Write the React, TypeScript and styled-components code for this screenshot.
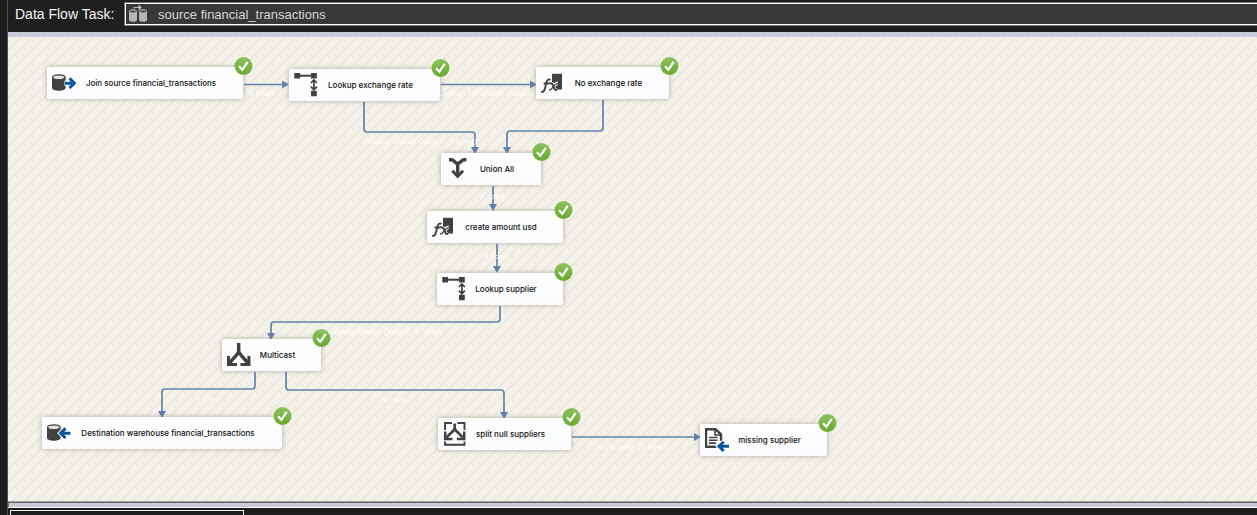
import React from "react";
import styled, { createGlobalStyle } from "styled-components";

const GlobalStyle = createGlobalStyle`
  *, *::before, *::after { box-sizing: border-box; }
  body {
    margin: 0;
    background: #1e1e1e;
    font-family: "Liberation Sans", Arial, sans-serif;
  }
`;

const LINE = "#6281ad";
const INK = "#414141";
const BLUE = "#0a559f";

const Page = styled.div`
  display: flex;
  flex-direction: column;
  min-height: 100vh;
  margin-left: 7px;
  border-left: 1px solid #4c4c4c;
  overflow: hidden;
`;

const Toolbar = styled.header`
  display: flex;
  align-items: center;
  height: 32px;
  padding: 2px 0 6px 7px;
  background: #1f1f1f;
`;

const ToolbarLabel = styled.label`
  flex: none;
  width: 109px;
  color: #f4f4f4;
  font-size: 14px;
  line-height: 24px;
`;

const TaskField = styled.div`
  display: flex;
  flex: 1;
  align-items: center;
  gap: 10px;
  height: 24px;
  padding-left: 3px;
  border: 1px solid #757575;
  border-right: 0;
  background: #383838;
  box-shadow: inset 1px 1px 0 #fff, inset 0 -1px 0 #fff;
`;

const TaskInput = styled.input`
  flex: 1;
  min-width: 0;
  padding: 1px 0 0;
  border: 0;
  outline: 0;
  background: transparent;
  color: #d6d6d6;
  font: 13px/20px "Liberation Sans", Arial, sans-serif;
`;

const Canvas = styled.main`
  position: relative;
  flex: 1;
  min-height: 469px;
  border-top: 5px solid #c8ccdb;
  background-color: #f4f1e9;
  background-image: linear-gradient(
    to bottom right,
    #e3e1da 0 2%,
    transparent 5% 45%,
    #e3e1da 49% 51%,
    transparent 55% 95%,
    #e3e1da 98%
  );
  background-size: 12px 12px;
  background-position: 1px 0;
`;

const Wires = styled.svg`
  position: absolute;
  top: 0;
  left: 0;
  width: 100%;
  height: 100%;
`;

const WireLabel = styled.span<{ $x: number; $y: number }>`
  position: absolute;
  left: ${(p) => p.$x}px;
  top: ${(p) => p.$y}px;
  color: rgba(255, 255, 255, 0.9);
  font: 400 8px/12px "Open Sans", "Segoe UI", sans-serif;
  white-space: nowrap;
`;

const NodeCard = styled.div<{ $x: number; $y: number; $w: number }>`
  position: absolute;
  left: ${(p) => p.$x}px;
  top: ${(p) => p.$y}px;
  display: flex;
  align-items: center;
  width: ${(p) => p.$w}px;
  height: 32px;
  padding: 0 17px 0 5px;
  border-radius: 2px;
  background: linear-gradient(#ffffff, #fafbfe);
  box-shadow: 0 0 5px rgba(90, 85, 70, 0.45);
`;

const NodeName = styled.span`
  flex: 1;
  color: #111;
  font: 500 8px/12px Inter, "Segoe UI", sans-serif;
  text-align: center;
  white-space: nowrap;
`;

const Badge = styled.svg`
  position: absolute;
  top: -10px;
  right: -10px;
  width: 19px;
  height: 19px;
`;

const Glyph = styled.svg`
  flex: none;
  width: 24px;
  height: 24px;
`;

const Splitter = styled.div`
  height: 7px;
  border-top: 1px solid #a3a19d;
  border-bottom: 1px solid #fff;
  background: #c9cad8;
  box-shadow: inset 0 1px 0 #666, inset 1px 0 0 #777;
`;

const PanelTray = styled.footer`
  height: 7px;
  padding: 2px 0 0 2px;
  background: #1e1e1e;
`;

const PanelTop = styled.div`
  width: 234px;
  height: 5px;
  border: 1px solid #f0f0f0;
  border-bottom: 0;
`;

type Kind = "source" | "lookup" | "derive" | "union" | "multicast" | "dest" | "split" | "file";

const Cylinder = () => (
  <>
    <path d="M0 6.300v10.500c0 1.900 3 3 6.800 3s6.800-1.100 6.800-3V6.300z" fill={INK} />
    <ellipse cx="6.800" cy="6.300" rx="6.200" ry="2.400" fill="#e4e4e4" stroke={INK} strokeWidth="1.300" />
  </>
);

const icons: Record<Kind, React.ReactNode> = {
  source: (
    <>
      <Cylinder />
      <path d="M12.500 12.200h9M17.500 7.400l4.900 4.800-4.900 4.800" fill="none" stroke="#fff" strokeWidth="5" />
      <path d="M13 12.200h9M17.500 7.400l4.900 4.800-4.900 4.800" fill="none" stroke={BLUE} strokeWidth="3" />
    </>
  ),
  dest: (
    <>
      <Cylinder />
      <path d="M23 12.200h-9M18.500 7.400l-4.900 4.800 4.900 4.800" fill="none" stroke="#fff" strokeWidth="5" />
      <path d="M23.500 12.200h-9M18.500 7.400l-4.900 4.800 4.900 4.800" fill="none" stroke={BLUE} strokeWidth="3" />
    </>
  ),
  lookup: (
    <>
      <path d="M0.300 0h5.800v5.500H0.300zM17 0h5.800v5.500H17zM17 17.800h5.800v5.500H17z" fill={INK} />
      <path d="M6 2.700h11" stroke={INK} strokeWidth="2" />
      <path d="M19.900 7.500v8.500M16.900 10l3-3 3 3M16.900 13.700l3 3 3-3" fill="none" stroke={INK} strokeWidth="1.700" />
    </>
  ),
  derive: (
    <>
      <path d="M11 2.800H21v15.700H11z" fill={INK} />
      <path d="M8.500 12.500q2.300-.8 3.200 1.200l1.600 4q.8 1.900 2.800 1M16.800 12.300q-2 0-4.300 3.300t-4.500 3.400" fill="none" stroke="#f4f4f4" strokeWidth="3.600" />
      <g fill="none" stroke={INK}>
        <path d="M0 20.700c2.400.7 3.300-.8 4-3.400l1.500-5.800c.7-2.600 2-3.700 4-2.700M2.600 12.500h6" strokeWidth="1.900" />
        <path d="M8.500 12.500q2.300-.8 3.200 1.200l1.600 4q.8 1.900 2.800 1" strokeWidth="1.900" />
        <path d="M16.800 12.300q-2 0-4.300 3.300t-4.500 3.400" strokeWidth="1.300" />
      </g>
    </>
  ),
  union: (
    <>
      <path
        d="M3 2.800h2.500c2.500 0 3.200 3.200 6.200 3.600c3-.4 3.700-3.600 6.200-3.600h2.500M11.700 6V19"
        fill="none"
        stroke={INK}
        strokeWidth="3.400"
      />
      <path d="M6.300 13.800l5.400 5.600 5.400-5.600" fill="none" stroke={INK} strokeWidth="3" />
    </>
  ),
  multicast: (
    <>
      <path d="M11.700 0V7.500c0 4-4 5.500-9 12.500M11.700 7.500c0 4 4 5.500 9 12.500" fill="none" stroke={INK} strokeWidth="3.400" />
      <path d="M1.500 13V21.500H10M21.900 13V21.500H13.400" fill="none" stroke={INK} strokeWidth="3" />
    </>
  ),
  split: (
    <>
      <path d="M9 1H2v7M14.500 1h7v7M2 19.500v3.300h19.500v-3.300" fill="none" stroke={INK} strokeWidth="1.900" />
      <path d="M11.700 1.500V6c0 3-4.500 4.500-8 9.500M11.700 6c0 3 4.500 4.500 8 9.500" fill="none" stroke={INK} strokeWidth="2.700" />
      <path d="M2.200 9.500v7.500H9.500M21.200 9.500v7.500H13.900" fill="none" stroke={INK} strokeWidth="2.500" />
    </>
  ),
  file: (
    <>
      <path d="M15 18.700H1V1.300h9.500l5.500 5v7" fill="none" stroke={INK} strokeWidth="2.400" />
      <path d="M10 1v6h6M4 9.500h8.500M4 12.300h8.500M4 15.100h7" fill="none" stroke={INK} strokeWidth="1.600" />
      <path d="M23.500 18.300h-9M18.500 13.700l-4.700 4.600 4.700 4.600" fill="none" stroke="#fff" strokeWidth="5" />
      <path d="M24 18.300h-9M18.700 13.700l-4.700 4.600 4.700 4.600" fill="none" stroke={BLUE} strokeWidth="3" />
    </>
  ),
};

interface FlowNode {
  kind: Kind;
  name: string;
  x: number;
  y: number;
  w: number;
}

const nodes: FlowNode[] = [
  { kind: "source", name: "Join source financial_transactions", x: 39, y: 30, w: 196 },
  { kind: "lookup", name: "Lookup exchange rate", x: 281, y: 32, w: 151 },
  { kind: "derive", name: "No exchange rate", x: 528, y: 30, w: 133 },
  { kind: "union", name: "Union All", x: 433, y: 116, w: 100 },
  { kind: "derive", name: "create amount usd", x: 419, y: 174, w: 136 },
  { kind: "lookup", name: "Lookup supplier", x: 429, y: 236, w: 126 },
  { kind: "multicast", name: "Multicast", x: 214, y: 302, w: 99 },
  { kind: "dest", name: "Destination warehouse financial_transactions", x: 34, y: 380, w: 240 },
  { kind: "split", name: "split null suppliers", x: 430, y: 381, w: 133 },
  { kind: "file", name: "missing supplier", x: 692, y: 387, w: 127 },
];

const wires = [
  "M236 47.500H275",
  "M433 47.500H523",
  "M356 65V92q0 3 3 3H464q3 0 3 3V111",
  "M595 63V91q0 3 -3 3H502q-3 0 -3 3V111",
  "M485 149V168",
  "M489 207V230",
  "M492 269V282q0 3 -3 3H266q-3 0 -3 3V297",
  "M247 335V349q0 3 -3 3H157q-3 0 -3 3V375",
  "M278 335V350q0 3 3 3H493q3 0 3 3V376",
  "M564 400H687",
];

const wireLabels = [
  { text: "4 rows", x: 241, y: 50 },
  { text: "Lookup No Match Output", x: 430, y: 50 },
  { text: "Lookup Match Output (4 rows)", x: 355, y: 98 },
  { text: "4 rows", x: 472, y: 153 },
  { text: "4 rows", x: 476, y: 213 },
  { text: "Lookup Match Output (4 rows)", x: 320, y: 288 },
  { text: "4 rows", x: 187, y: 355 },
  { text: "4 rows", x: 374, y: 356 },
  { text: "Nullsuplier (1 rows)", x: 588, y: 403 },
];

const TaskIcon = () => (
  <svg width="20" height="18" viewBox="0 0 20 18" aria-hidden="true">
    <path d="M1 7v8c0 1 1.800 1.800 4 1.800s4-.8 4-1.800V7zM11 7v8c0 1 1.800 1.800 4 1.800s4-.8 4-1.800V7z" fill="#b5b5b5" />
    <ellipse cx="5" cy="6.500" rx="3.600" ry="1.700" fill="#4a4a4a" stroke="#c9c9c9" />
    <ellipse cx="15" cy="6.500" rx="3.600" ry="1.700" fill="#4a4a4a" stroke="#c9c9c9" />
    <path d="M6 3.500q0-1 1-1h5.500M10.500 0.300l2.300 2.200-2.300 2.200" fill="none" stroke="#c9c9c9" strokeWidth="1.200" />
  </svg>
);

const Success = () => (
  <Badge viewBox="0 0 19 19" role="img" aria-label="Succeeded">
    <circle cx="9.500" cy="9" r="9" fill="url(#ok)" />
    <path d="M5 9.300l3.300 3.500 5.400-8" fill="none" stroke="#fff" strokeWidth="2.200" />
  </Badge>
);

export default function App() {
  return (
    <>
      <GlobalStyle />
      <Page>
        <Toolbar>
          <ToolbarLabel htmlFor="task">Data Flow Task:</ToolbarLabel>
          <TaskField>
            <TaskIcon />
            <TaskInput id="task" readOnly defaultValue="source financial_transactions" />
          </TaskField>
        </Toolbar>
        <Canvas>
          <Wires aria-hidden="true">
            <defs>
              <marker
                id="arrow"
                viewBox="0 0 7 8"
                refX="1"
                refY="4"
                markerWidth="7"
                markerHeight="8"
                markerUnits="userSpaceOnUse"
                orient="auto"
              >
                <path d="M0 0L7 4L0 8z" fill={LINE} />
              </marker>
              <linearGradient id="ok" x1="0" y1="0" x2="0" y2="1">
                <stop offset="0" stopColor="#8cc25e" />
                <stop offset="1" stopColor="#68ab30" />
              </linearGradient>
            </defs>
            {wires.map((d) => (
              <path key={d} d={d} fill="none" stroke={LINE} strokeWidth="1.700" markerEnd="url(#arrow)" />
            ))}
          </Wires>
          {nodes.map((n) => (
            <NodeCard key={n.name} $x={n.x} $y={n.y} $w={n.w}>
              <Glyph viewBox="0 0 24 24" aria-hidden="true">
                {icons[n.kind]}
              </Glyph>
              <NodeName>{n.name}</NodeName>
              <Success />
            </NodeCard>
          ))}
          {wireLabels.map((l) => (
            <WireLabel key={`${l.x}-${l.y}`} $x={l.x} $y={l.y}>
              {l.text}
            </WireLabel>
          ))}
        </Canvas>
        <Splitter />
        <PanelTray>
          <PanelTop />
        </PanelTray>
      </Page>
    </>
  );
}
